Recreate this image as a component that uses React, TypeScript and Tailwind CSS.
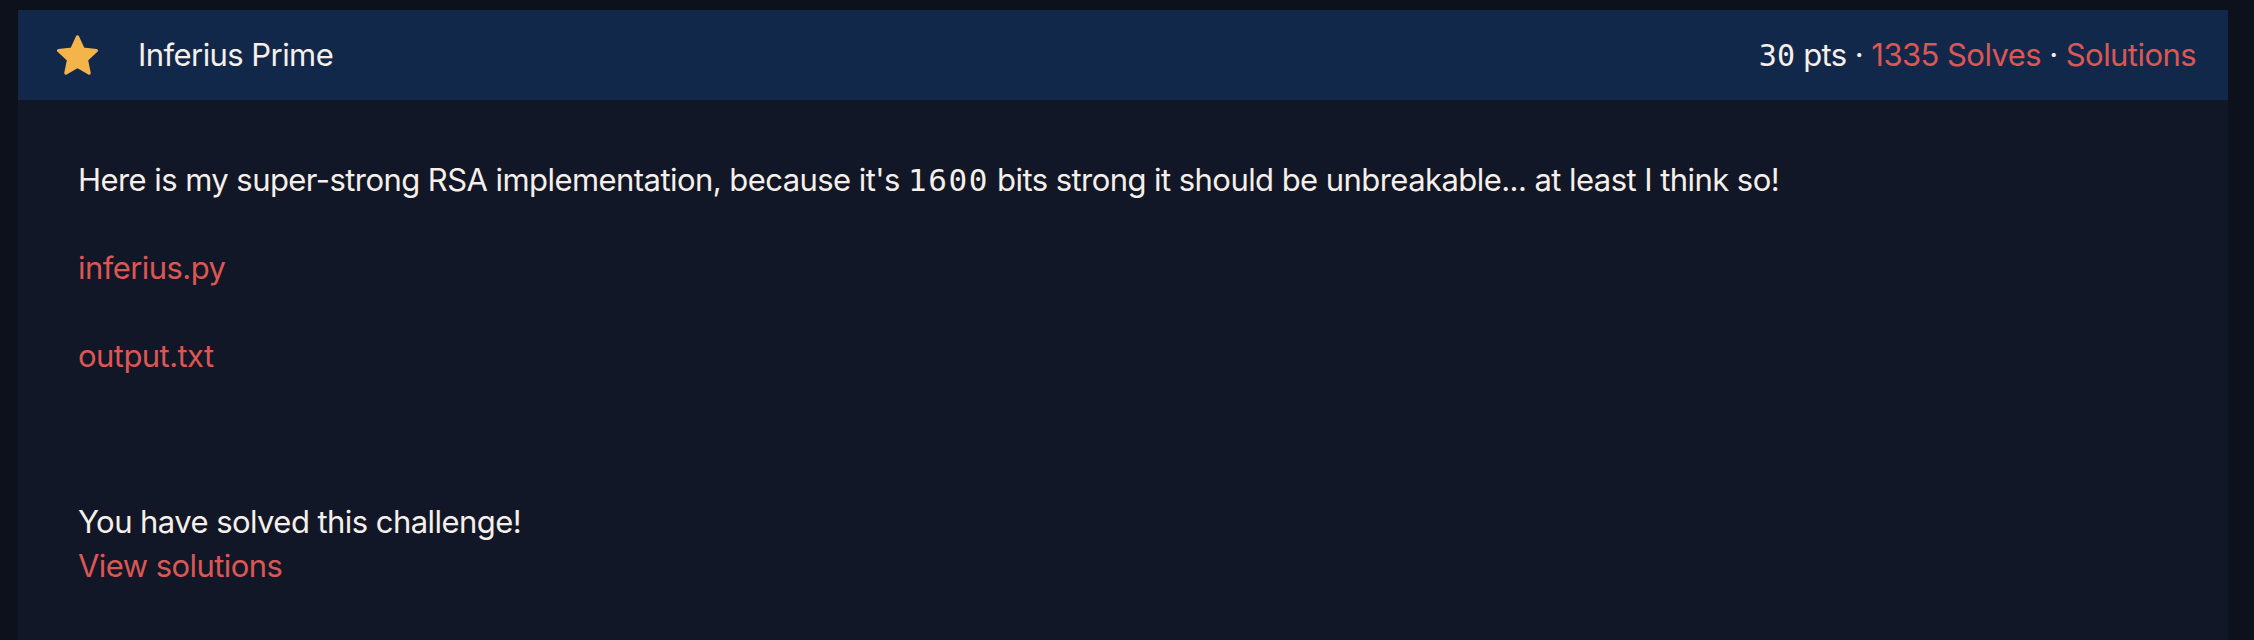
const App = () => {
  const files = ['inferius.py', 'output.txt'];

  return (
    <div className="h-[640px] overflow-hidden bg-[#0c111c] pl-[18px] pr-[26px] pt-[10px] font-['Inter',sans-serif] text-[31px] leading-[44px] tracking-[-0.018em] text-[#f7efe9]">
      <div className="flex h-full flex-col bg-[#111726]">
        {/* Header */}
        <div className="flex h-[90px] items-center justify-between bg-[#12284b] pl-[39px] pr-[32px]">
          <div className="flex items-center gap-[40px]">
            <svg className="h-[40px] w-[41px]" viewBox="2.1 1.8 19.8 19" fill="#f3b54a">
              <path
                stroke="#f3b54a"
                strokeWidth="1.6"
                strokeLinejoin="round"
                d="M12 2.6l2.7 5.9 6.4.7-4.8 4.4 1.3 6.4L12 16.8 6.4 20l1.3-6.4-4.8-4.4 6.4-.7z"
              />
            </svg>
            <span>Inferius Prime</span>
          </div>
          <div className="whitespace-pre">
            <span className="font-['DejaVu_Sans_Mono',monospace] text-[30px] tracking-normal">30</span>
            {' pts · '}
            <a href="#" className="text-[#dc5753]">1335 Solves</a>
            {' · '}
            <a href="#" className="text-[#dc5753]">Solutions</a>
          </div>
        </div>

        {/* Body */}
        <div className="flex-1 pl-[60px] pt-[58px]">
          <p className="mb-[44px]">
            Here is my super-strong RSA implementation, because it's{' '}
            <span className="font-['DejaVu_Sans_Mono',monospace] text-[31px] tracking-[0.05em]">1600</span> bits strong it
            should be unbreakable... at least I think so!
          </p>
          {files.map((file) => (
            <p key={file} className="mb-[44px]">
              <a href="#" className="text-[#dc5753]">
                {file}
              </a>
            </p>
          ))}
          <div className="mt-[122px]">
            <p>You have solved this challenge!</p>
            <a href="#" className="text-[#dc5753]">
              View solutions
            </a>
          </div>
        </div>
      </div>
    </div>
  );
};

export default App;
